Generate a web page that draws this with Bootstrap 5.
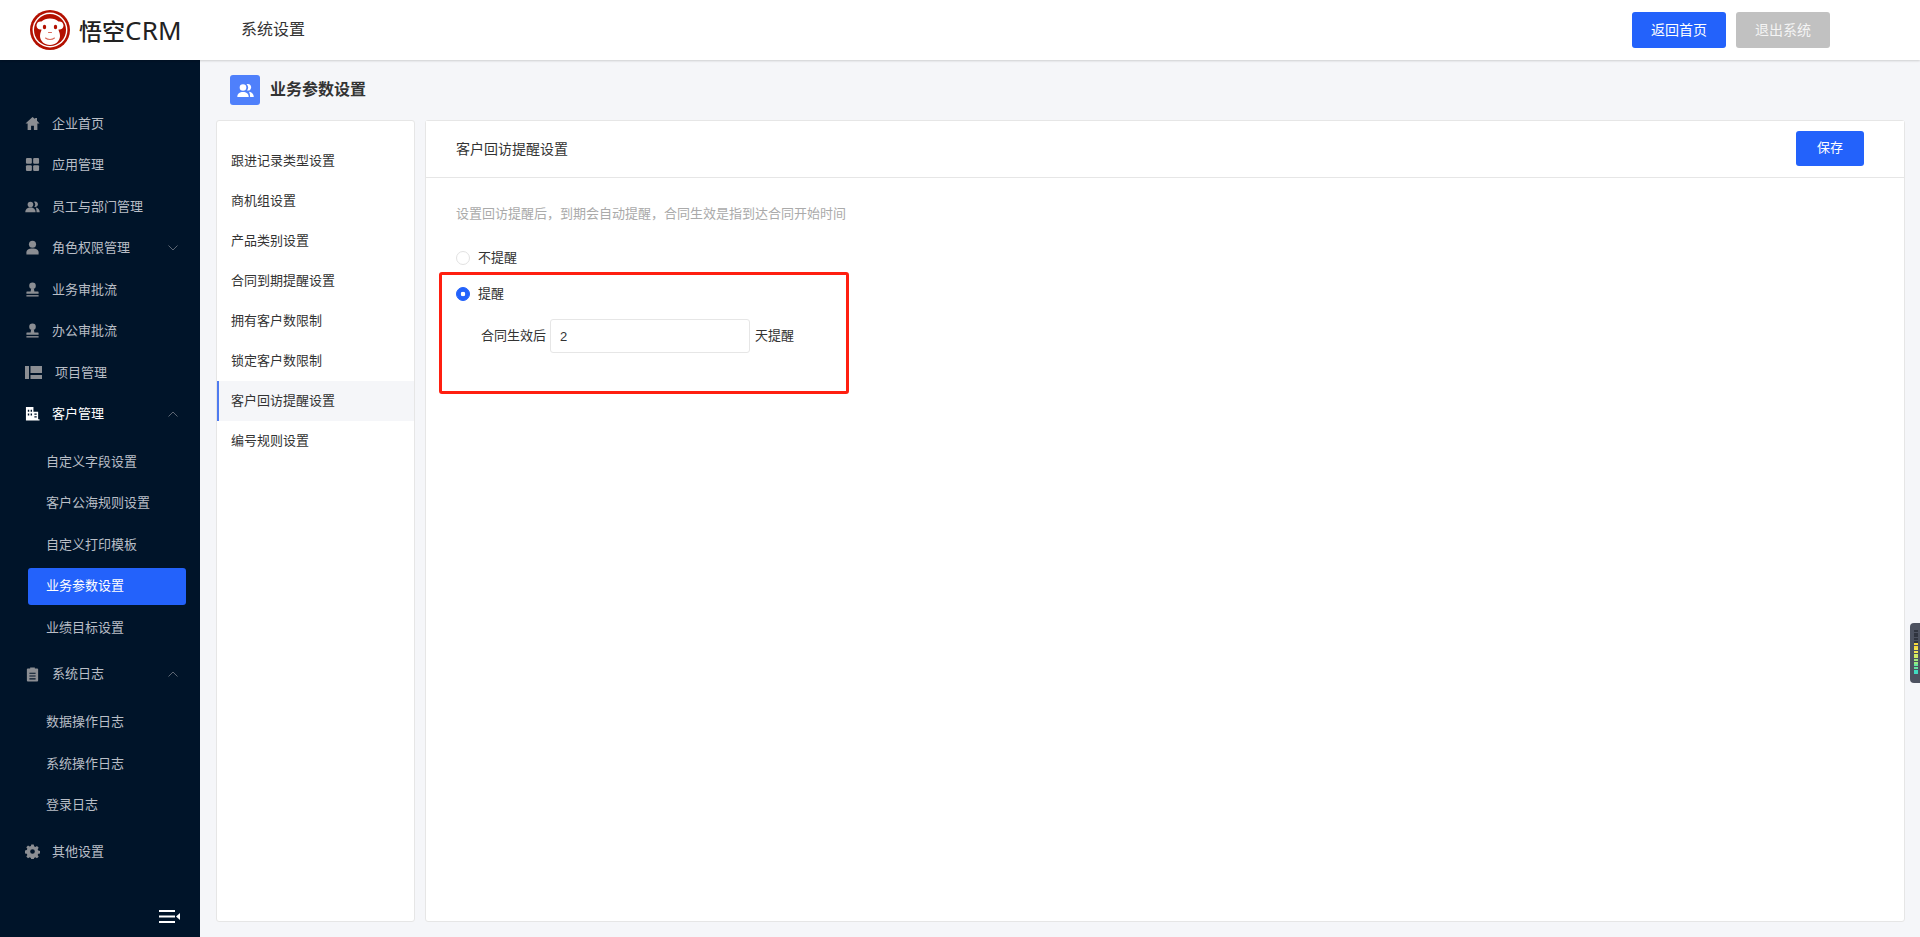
<!DOCTYPE html>
<html lang="zh-CN">
<head>
<meta charset="utf-8">
<title>悟空CRM</title>
<link href="https://cdn.jsdelivr.net/npm/bootstrap@5.3.0/dist/css/bootstrap.min.css" rel="stylesheet">
<style>
html,body{height:100%;}
body{font-family:"Liberation Sans","Noto Sans CJK SC",sans-serif;font-size:13px;color:#333;background:#f5f6f9;overflow:hidden;}
.top-bar{height:60px;background:#fff;box-shadow:0 1px 2px rgba(0,0,0,.16);position:relative;z-index:2;padding-left:30px;padding-right:90px;}
.logo-text{font-size:23px;line-height:1;color:#222;margin-left:9px;width:102px;white-space:nowrap;font-family:"Noto Sans CJK SC",sans-serif;font-weight:500;}
.logo-text span{font-family:"Noto Sans",sans-serif;font-weight:400;font-size:26px;letter-spacing:.2px;}
.sys-name{font-size:16px;color:#333;margin-left:60px;}
.head-gap{gap:10px;}
.head-btn{width:94px;height:36px;padding:0;font-size:14px;border-radius:3px;color:#fff;border:0;}
.btn-blue,.btn-blue:hover{background:#2362fb;color:#fff;}
.btn-grey,.btn-grey:hover{background:#c1c1c1;color:#f4f4f4;}
.page-wrap{height:877px;}
.side-bar{width:200px;background:#001429;padding-top:42.5px;position:relative;color:#b9bec6;}
.side-row{height:41.5px;padding:0 21px 0 25px;color:#b9bec6;text-decoration:none;}
.side-row svg.ico{width:15px;height:15px;flex:none;margin-right:12px;color:#8b8e93;}
.side-row svg.ico-w{width:17px;margin-right:13px;}
.side-row.is-open{color:#fff;}
.side-row.is-open svg.ico{color:#fff;}
.side-row .chev{width:10px;height:6px;margin-left:auto;color:#5d6673;margin-right:1px;}
.sub-list{padding:8.500px 0 7.250px;gap:4.5px;}
.sub-row{height:37px;margin:0 14px 0 28px;padding-left:18px;border-radius:3px;color:#b9bec6;text-decoration:none;}
.sub-row.is-active{background:#2362fb;color:#fff;}
.side-toggle{position:absolute;left:159px;bottom:14px;width:21px;height:13px;}
.main-pane{padding:0 15px 0 16px;min-width:0;}
.page-title{height:60px;padding-left:14px;font-size:16px;font-weight:700;color:#333;}
.title-ico{width:30px;height:30px;background:#4f80fb;border-radius:3px;margin-right:10px;}
.title-ico svg{width:17px;height:15px;}
.panels{height:802px;gap:10px;}
.panel-left{width:199px;flex:none;border:1px solid #e6e6e6;border-radius:3px;padding-top:20px;background:#fff;}
.panel-right{border:1px solid #e6e6e6;border-radius:3px;background:#fff;min-width:0;}
.list-group .opt-row{height:40px;padding:0 0 1px 12px;border:0;border-left:2px solid transparent;border-radius:0;font-size:13px;color:#333;background:transparent;}
.list-group .opt-row.active{background:#f5f6f9;border-left:2px solid #4f7bf0;color:#333;margin-top:0;}
.panel-head{height:57px;padding:0 40px 0 30px;border-bottom:1px solid #e6e6e6;font-size:14px;color:#333;background:#fff;}
.save-btn{width:68px;height:35px;padding:0;font-size:13px;border-radius:3px;border:0;margin-bottom:2px;}
.panel-body{padding:26px 0 0 30px;}
.hint-text{font-size:13px;color:#aaa;line-height:20px;height:20px;margin-bottom:24px;}
.radio-line{height:20px;margin:0;padding:0;min-height:0;}
.radio-line + .radio-line{margin-top:16px;}
.radio-line .form-check-input{width:14px;height:14px;margin:0 8px 0 0;float:none;border:1px solid #e2e2e2;box-shadow:none;}
.radio-line .form-check-input:checked{background-color:#2362fb;border-color:#2362fb;background-image:radial-gradient(circle,#fff 0 2px,transparent 2.6px);}
.radio-line .form-check-label{color:#333;}
.mark-box{position:absolute;left:13px;top:151px;width:410px;height:122px;border:3px solid #ff1f10;border-radius:3px;pointer-events:none;}
.pane-rel{position:relative;}
.days-line{margin:15px 0 0 25px;color:#333;}
.days-line .form-control{width:200px;height:34px;margin:0 5px 0 4px;padding:0 9px;font-size:13px;color:#333;border-color:#e6e6e6;border-radius:3px;box-shadow:none;}
.meter-tab{position:absolute;right:0;top:623px;width:10px;height:60px;background:#4d5260;border-radius:4px 0 0 4px;padding:7px 0 0 4px;z-index:3;}
.meter-tab i{display:block;height:2px;width:4px;margin-bottom:.65px;}
.mt-off{background:#30343f;}
.mt-a{background:#f7d83f;}.mt-b{background:#f3e650;}.mt-c{background:#cfea64;}.mt-d{background:#9ce97e;}.mt-e{background:#66e3a0;}.mt-f{background:#41dcc0;}
</style>
</head>
<body>
<header class="top-bar d-flex align-items-center">
  <svg width="40" height="40" viewBox="0 0 40 40" class="flex-shrink-0" aria-hidden="true">
    <circle cx="20" cy="20" r="20" fill="#b31000"/>
    <circle cx="20" cy="20" r="17.4" fill="#fff"/>
    <circle cx="20" cy="20" r="16" fill="#b31000"/>
    <path d="M6.500 15.500c0-3 2.600-4.600 5-4 2-2 5-3 8.500-3s6.500 1 8.500 3c2.400-.6 5 1 5 4s-2.500 4.500-5 4c0 1.500 1.500 3 1.500 6.500 0 5-4.500 9-10 9s-10-4-10-9c0-3.500 1.500-5 1.500-6.500-2.500.5-5-1-5-4z" fill="#fff"/>
    <ellipse cx="14.500" cy="17" rx="1.700" ry="2.200" fill="#b31000"/>
    <ellipse cx="25.500" cy="17" rx="1.700" ry="2.200" fill="#b31000"/>
    <path d="M18.500 22.500h3M15.500 28c2.500 2 6.500 2 9 0" stroke="#d96a5c" stroke-width="1.100" fill="none" stroke-linecap="round"/>
  </svg>
  <div class="logo-text">悟空<span>CRM</span></div>
  <div class="sys-name">系统设置</div>
  <div class="ms-auto d-flex head-gap">
    <button type="button" class="btn head-btn btn-blue">返回首页</button>
    <button type="button" class="btn head-btn btn-grey">退出系统</button>
  </div>
</header>
<div class="page-wrap d-flex">
  <aside class="side-bar flex-shrink-0">
    <a class="side-row d-flex align-items-center"><svg class="ico" viewBox="0 0 16 16" fill="currentColor"><path d="M8 1 .5 8h2.300v7h3.700v-4.500h3V15h3.700V8h2.300L12.800 5V2h-2v1.200z"/></svg>企业首页</a>
    <a class="side-row d-flex align-items-center"><svg class="ico" viewBox="0 0 16 16" fill="currentColor"><rect x="1" y="1" width="6.300" height="6.300" rx="1.200"/><rect x="8.700" y="1" width="6.300" height="6.300" rx="1.200"/><rect x="1" y="8.700" width="6.300" height="6.300" rx="1.200"/><rect x="8.700" y="8.700" width="6.300" height="6.300" rx="1.200"/></svg>应用管理</a>
    <a class="side-row d-flex align-items-center"><svg class="ico" viewBox="0 0 16 16" fill="currentColor"><circle cx="5.800" cy="5.800" r="3"/><path d="M.3 14c0-3 2.200-5 5.500-5s5.500 2 5.500 5z"/><path d="M9.500 2.900a3 3 0 1 1 1.200 5.700c-.3-.1-.5-.2-.7-.4a4 4 0 0 0-.5-5.300zM11.500 9c2.500.3 4.200 2.200 4.200 5h-3.400c0-2-.2-3.500-.8-5z"/></svg>员工与部门管理</a>
    <a class="side-row d-flex align-items-center"><svg class="ico" viewBox="0 0 16 16" fill="currentColor"><circle cx="8" cy="4.500" r="3.800"/><path d="M1.500 15.500v-2.500c0-2.500 2.500-4 6.500-4s6.500 1.500 6.500 4v2.500z"/></svg>角色权限管理<svg class="chev" viewBox="0 0 10 6" fill="none" stroke="currentColor"><path d="M.5.500 5 5l4.500-4.500"/></svg></a>
    <a class="side-row d-flex align-items-center"><svg class="ico" viewBox="0 0 16 16" fill="currentColor"><circle cx="8" cy="4" r="3.500"/><path d="M6.500 7h3l.5 3h3.500c.8 0 1 .5 1 1v1.500H1.500V11c0-.5.2-1 1-1H6z"/><rect x="1.500" y="14" width="13" height="1.500"/></svg>业务审批流</a>
    <a class="side-row d-flex align-items-center"><svg class="ico" viewBox="0 0 16 16" fill="currentColor"><circle cx="8" cy="4" r="3.500"/><path d="M6.500 7h3l.5 3h3.500c.8 0 1 .5 1 1v1.500H1.500V11c0-.5.2-1 1-1H6z"/><rect x="1.500" y="14" width="13" height="1.500"/></svg>办公审批流</a>
    <a class="side-row d-flex align-items-center"><svg class="ico ico-w" viewBox="0 0 17 15" fill="currentColor"><rect x="0" y="1" width="4" height="13"/><rect x="5.500" y="1" width="11.500" height="7"/><rect x="5.500" y="10" width="11.500" height="4"/></svg>项目管理</a>
    <a class="side-row is-open d-flex align-items-center"><svg class="ico" viewBox="0 0 16 16" fill="currentColor"><path d="M1 15.500V1h8v5h5v8h1.500v1.500z"/><path d="M3 4h1.500v2H3zm3 0h1.500v2H6zM3 8h1.500v2H3zm3 0h1.500v2H6zm4 0h2.500v1.200H10zm0 3h2.500v1.200H10z" fill="#001429"/></svg>客户管理<svg class="chev" viewBox="0 0 10 6" fill="none" stroke="currentColor"><path d="M.5 5.500 5 1l4.500 4.500"/></svg></a>
    <div class="sub-list d-flex flex-column">
      <a class="sub-row d-flex align-items-center">自定义字段设置</a>
      <a class="sub-row d-flex align-items-center">客户公海规则设置</a>
      <a class="sub-row d-flex align-items-center">自定义打印模板</a>
      <a class="sub-row is-active d-flex align-items-center">业务参数设置</a>
      <a class="sub-row d-flex align-items-center">业绩目标设置</a>
    </div>
    <a class="side-row d-flex align-items-center"><svg class="ico" viewBox="0 0 16 16" fill="currentColor"><path fill-rule="evenodd" d="M5.500 1.500V.5h5v1H13c.6 0 1 .4 1 1v12c0 .6-.4 1-1 1H3c-.6 0-1-.4-1-1v-12c0-.6.4-1 1-1zM4.700 6v1.200h6.600V6zm0 3v1.200h6.600V9zm0 3v1.200h6.600V12z"/></svg>系统日志<svg class="chev" viewBox="0 0 10 6" fill="none" stroke="currentColor"><path d="M.5 5.500 5 1l4.500 4.500"/></svg></a>
    <div class="sub-list d-flex flex-column">
      <a class="sub-row d-flex align-items-center">数据操作日志</a>
      <a class="sub-row d-flex align-items-center">系统操作日志</a>
      <a class="sub-row d-flex align-items-center">登录日志</a>
    </div>
    <a class="side-row d-flex align-items-center"><svg class="ico" viewBox="0 0 16 16" fill="currentColor"><path fill-rule="evenodd" d="M6.700.5h2.600l.4 2 1.300.6 1.800-1.100 1.800 1.900-1.100 1.700.6 1.300 2 .5v2.600l-2 .4-.6 1.300 1.100 1.800-1.900 1.800-1.700-1.100-1.300.6-.4 2H6.700l-.4-2-1.300-.6-1.800 1.100-1.800-1.900 1.100-1.700-.6-1.300-2-.4V6.900l2-.5.6-1.300L1.400 3.400l1.800-1.900L5 2.600l1.300-.6zM8 5.500a2.500 2.500 0 1 0 0 5 2.500 2.500 0 0 0 0-5z"/></svg>其他设置</a>
    <svg class="side-toggle" viewBox="0 0 21 13" fill="#fff"><rect y="0" width="16" height="2"/><rect y="5.500" width="16" height="2"/><rect y="11" width="16" height="2"/><path d="M21 3v7l-4-3.500z"/></svg>
  </aside>
  <main class="main-pane flex-grow-1 d-flex flex-column">
    <div class="page-title d-flex align-items-center">
      <span class="title-ico d-flex align-items-center justify-content-center"><svg viewBox="0 0 17 15" fill="#fff"><circle cx="6" cy="4.500" r="3.300"/><path d="M.3 14c0-3.200 2.300-5 5.700-5s5.700 1.800 5.700 5z"/><path d="M9.500 1.300a3.300 3.300 0 1 1 1.300 6.300c-.3 0-.5-.1-.8-.2a4.500 4.500 0 0 0-.5-6.100zM12 8.800c3 .4 4.800 2.200 4.800 5.200h-3.700c0-2-.3-3.700-1.100-5.200z"/></svg></span>
      业务参数设置
    </div>
    <div class="panels d-flex pane-rel">
      <div class="panel-left">
        <div class="list-group list-group-flush">
          <a class="list-group-item opt-row d-flex align-items-center">跟进记录类型设置</a>
          <a class="list-group-item opt-row d-flex align-items-center">商机组设置</a>
          <a class="list-group-item opt-row d-flex align-items-center">产品类别设置</a>
          <a class="list-group-item opt-row d-flex align-items-center">合同到期提醒设置</a>
          <a class="list-group-item opt-row d-flex align-items-center">拥有客户数限制</a>
          <a class="list-group-item opt-row d-flex align-items-center">锁定客户数限制</a>
          <a class="list-group-item opt-row active d-flex align-items-center">客户回访提醒设置</a>
          <a class="list-group-item opt-row d-flex align-items-center">编号规则设置</a>
        </div>
      </div>
      <div class="panel-right flex-grow-1 pane-rel">
        <div class="panel-head d-flex align-items-center justify-content-between">
          <span>客户回访提醒设置</span>
          <button type="button" class="btn save-btn btn-blue">保存</button>
        </div>
        <div class="panel-body">
          <div class="hint-text">设置回访提醒后，到期会自动提醒，合同生效是指到达合同开始时间</div>
          <div class="form-check radio-line d-flex align-items-center">
            <input class="form-check-input" type="radio" name="remind" id="r0">
            <label class="form-check-label" for="r0">不提醒</label>
          </div>
          <div class="form-check radio-line d-flex align-items-center">
            <input class="form-check-input" type="radio" name="remind" id="r1" checked>
            <label class="form-check-label" for="r1">提醒</label>
          </div>
          <div class="days-line d-flex align-items-center">
            <span>合同生效后</span>
            <input class="form-control" type="text" value="2">
            <span>天提醒</span>
          </div>
        </div>
        <div class="mark-box"></div>
      </div>
    </div>
  </main>
</div>
<div class="meter-tab">
  <i class="mt-off"></i><i class="mt-off"></i><i class="mt-off"></i><i class="mt-off"></i><i class="mt-off"></i>
  <i class="mt-a"></i><i class="mt-a"></i><i class="mt-b"></i><i class="mt-b"></i><i class="mt-c"></i><i class="mt-c"></i><i class="mt-d"></i><i class="mt-d"></i><i class="mt-e"></i><i class="mt-e"></i><i class="mt-f"></i><i class="mt-f"></i>
</div>
<script src="https://cdn.jsdelivr.net/npm/bootstrap@5.3.0/dist/js/bootstrap.bundle.min.js"></script>
</body>
</html>
